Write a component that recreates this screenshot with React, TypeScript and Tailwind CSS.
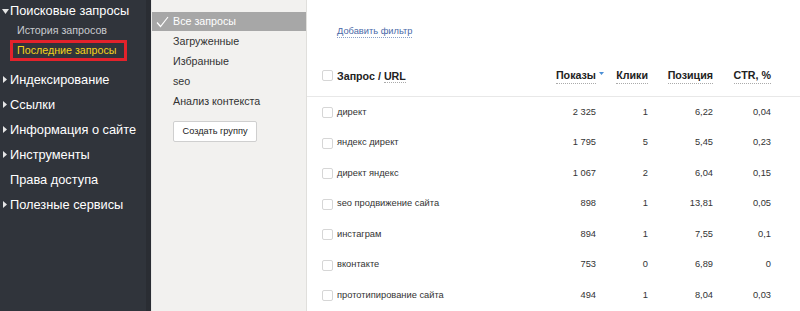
import React from "react";

const rows = [
  ["директ", "2 325", "1", "6,22", "0,04"],
  ["яндекс директ", "1 795", "5", "5,45", "0,23"],
  ["директ яндекс", "1 067", "2", "6,04", "0,15"],
  ["seo продвижение сайта", "898", "1", "13,81", "0,05"],
  ["инстаграм", "894", "1", "7,55", "0,1"],
  ["вконтакте", "753", "0", "6,89", "0"],
  ["прототипирование сайта", "494", "1", "8,04", "0,03"],
];

function Tri({ open }: { open?: boolean }) {
  return (
    <span className="w-[10px] flex justify-center items-center shrink-0">
      {open ? (
        <svg width="7" height="5" viewBox="0 0 7 5"><path d="M0 0h7L3.5 5z" fill="#e5e5e5" /></svg>
      ) : (
        <svg width="4" height="7" viewBox="0 0 4 7"><path d="M0 0l4 3.5L0 7z" fill="#e5e5e5" /></svg>
      )}
    </span>
  );
}

function Box() {
  return <span className="w-[11px] h-[11px] border border-[#d6d6d6] rounded-[2px] bg-white shrink-0" />;
}

export default function App() {
  const top = ["Индексирование", "Ссылки", "Информация о сайте", "Инструменты", "Права доступа", "Полезные сервисы"];
  return (
    <div className="w-[800px] h-[311px] flex overflow-hidden bg-white whitespace-nowrap" style={{ fontFamily: '"Liberation Sans", Arial, sans-serif' }}>
      {/* Sidebar */}
      <div className="w-[152px] shrink-0 flex bg-[#30343b]">
        <div className="flex-1 flex flex-col pt-[2px]">
          <div className="h-[18px] flex items-center text-[12.8px] text-white">
            <Tri open />
            <span>Поисковые запросы</span>
          </div>
          <div className="h-[20px] flex items-center pl-[17px] text-[10.7px] text-[#c9cbcf]">История запросов</div>
          <div className="ml-[10px] w-[117px] h-[21px] border-[3px] border-[#e3222b] flex items-center pl-[4px] text-[10.7px] text-[#f3d21b]">Последние запросы</div>
          <div className="mt-[6px] flex flex-col">
            {top.map((t, i) => (
              <div key={t} className="h-[25px] flex items-center text-[12.8px] text-white">
                {i === 4 ? <span className="w-[10px]" /> : <Tri />}
                <span>{t}</span>
              </div>
            ))}
          </div>
        </div>
        <div className="w-[5px] bg-[#2a2d33]" />
        <div className="w-[1px] bg-[#e8e8e6]" />
      </div>
      {/* Middle */}
      <div className="w-[155px] shrink-0 bg-[#f2f1ef] border-r border-[#e0dfdc] pt-[12px] flex flex-col">
        <div className="h-[19px] bg-[#a7a7a7] flex items-center text-[10.7px] text-white">
          <span className="w-[21px] flex justify-end pr-[4px]">
            <svg width="13" height="12" viewBox="0 0 13 12"><path d="M1 6.5l3.5 4L12 1" fill="none" stroke="#fff" strokeWidth="1.2" /></svg>
          </span>
          <span>Все запросы</span>
        </div>
        {["Загруженные", "Избранные", "seo", "Анализ контекста"].map((t) => (
          <div key={t} className="h-[20px] flex items-center pl-[21px] text-[10.7px] text-[#333]">{t}</div>
        ))}
        <div className="pl-[21px] mt-[10px]">
          <button className="w-[84px] h-[21px] bg-white border border-[#cfcfcf] rounded-[2px] text-[9.2px] text-[#222] flex items-center justify-center">Создать группу</button>
        </div>
      </div>
      {/* Main */}
      <div className="flex-1 flex flex-col pt-[25px]">
        <div className="pl-[30px] h-[14px] flex items-center">
          <span className="text-[9.3px] text-[#4a69a8] border-b border-dotted border-[#8aa0c8] leading-[11px]">Добавить фильтр</span>
        </div>
        <div className="mt-[17px] h-[41px] border-b border-[#e8e8e8] flex items-center pl-[15px] pr-[29px] text-[10.7px] font-bold text-[#222]">
          <Box />
          <span className="ml-[4px] flex-1">Запрос / <span className="border-b border-dotted border-[#aaa]">URL</span></span>
          <span className="w-[80px] flex justify-end relative">
            <span className="border-b border-dotted border-[#aaa]">Показы</span>
            <svg className="absolute right-[-8px] top-[5px]" width="5" height="3" viewBox="0 0 5 3"><path d="M0 0h5L2.5 3z" fill="#4b8fd6" /></svg>
          </span>
          <span className="w-[52px] flex justify-end"><span className="border-b border-dotted border-[#aaa]">Клики</span></span>
          <span className="w-[65px] flex justify-end"><span className="border-b border-dotted border-[#aaa]">Позиция</span></span>
          <span className="w-[58px] flex justify-end"><span className="border-b border-dotted border-[#aaa]">CTR, %</span></span>
        </div>
        <div className="flex flex-col pt-[1px]">
          {rows.map((r) => (
            <div key={r[0]} className="h-[30.5px] flex items-center pl-[15px] pr-[29px] text-[9.3px] text-[#333]">
              <Box />
              <span className="ml-[4px] flex-1">{r[0]}</span>
              <span className="w-[80px] text-right">{r[1]}</span>
              <span className="w-[52px] text-right">{r[2]}</span>
              <span className="w-[65px] text-right">{r[3]}</span>
              <span className="w-[58px] text-right">{r[4]}</span>
            </div>
          ))}
        </div>
      </div>
    </div>
  );
}
